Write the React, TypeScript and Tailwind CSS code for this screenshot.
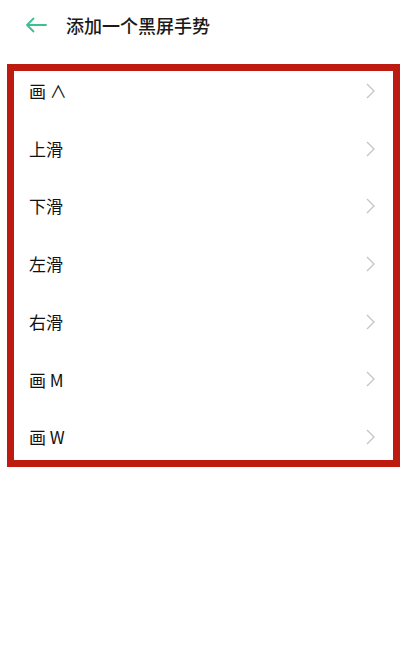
const items = ['画 ∧', '上滑', '下滑', '左滑', '右滑', '画 M', '画 W']

export default function App() {
  return (
    <div className="w-[415px] h-[661px] bg-white" style={{ fontFamily: '"Noto Sans CJK SC", "Noto Sans", sans-serif' }}>
      <div className="flex items-center h-[50px] pl-[25px]">
        <svg width="22" height="16" viewBox="0 0 22 16" fill="none" stroke="#3fbf8f" strokeWidth="1.8" strokeLinecap="round" strokeLinejoin="round">
          <path d="M21 8H2M8.5 1.5L2 8l6.5 6.5" />
        </svg>
        <span className="ml-[19px] text-[18px] text-[#1a1a1a] font-medium">添加一个黑屏手势</span>
      </div>
      <div className="ml-[7px] mt-[14px] w-[393px] h-[403px] border-[7px] border-[#bd1a10]">
        <div className="flex flex-col -mt-[9px]">
          {items.map(t => (
            <div key={t} className="flex items-center justify-between h-[57.7px] pl-[15px] pr-[18px]">
              <span className="text-[17px] text-[#111]">{t}</span>
              <svg width="9" height="16" viewBox="0 0 9 16" fill="none" stroke="#c4c4c4" strokeWidth="1.3">
                <path d="M1 1l7 7-7 7" />
              </svg>
            </div>
          ))}
        </div>
      </div>
    </div>
  )
}
